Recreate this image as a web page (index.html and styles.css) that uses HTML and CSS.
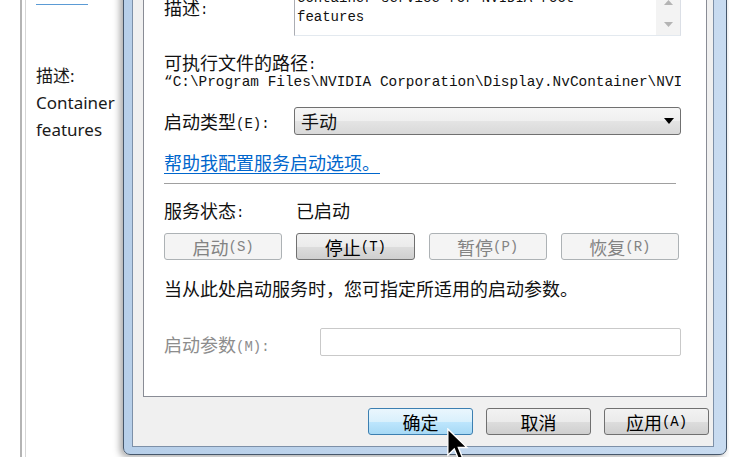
FILE: index.html
```html
<!DOCTYPE html>
<html lang="zh-CN">
<head>
    <meta charset="UTF-8">
    <meta name="viewport" content="width=device-width, initial-scale=1.0">
    <title>NVIDIA 服务属性</title>
    <link rel="stylesheet" href="styles.css">
</head>
<body>

<div class="screen">

    <!-- 后面的服务窗口 -->
    <div class="behind">
        <div class="pane">
            <div class="pane-in">
                <div class="link-cut"></div>
                <div class="side-desc">
                    <p>描述:</p>
                    <p>Container</p>
                    <p>features</p>
                </div>
            </div>
        </div>
    </div>

    <!-- 属性对话框 -->
    <div class="dialog">
        <div class="client">
            <div class="tab-page">

                <!-- 描述 -->
                <div class="row desc-row">
                    <span class="label desc-label">描述<span class="acc">:</span></span>
                    <div class="desc-box">
                        <div class="desc-text">Container service for NVIDIA root<br>features</div>
                        <div class="scrollbar">
                            <svg width="9" height="5" viewBox="0 0 9 5"><path d="M0 5 L4.5 0 L9 5 Z" fill="#b4b4b4"/></svg>
                            <svg width="9" height="5" viewBox="0 0 9 5"><path d="M0 0 L9 0 L4.5 5 Z" fill="#b4b4b4"/></svg>
                        </div>
                    </div>
                </div>

                <!-- 可执行文件的路径 -->
                <div class="path-label">可执行文件的路径<span class="acc">:</span></div>
                <div class="path">“C:\Program Files\NVIDIA Corporation\Display.NvContainer\NVIDIA Share.exe”</div>

                <!-- 启动类型 -->
                <div class="row type-row">
                    <span class="label type-label">启动类型<span class="acc">(E):</span></span>
                    <div class="select">
                        <span>手动</span>
                        <svg width="10" height="6" viewBox="0 0 10 6"><path d="M0 0 L10 0 L5 6 Z" fill="#000"/></svg>
                    </div>
                </div>

                <a class="help" href="#">帮助我配置服务启动选项。</a>

                <div class="sep"></div>

                <!-- 服务状态 -->
                <div class="row status-row">
                    <span class="label status-label">服务状态<span class="acc">:</span></span>
                    <span>已启动</span>
                </div>

                <div class="svc-buttons">
                    <button class="btn off">启动<span class="acc">(S)</span></button>
                    <button class="btn">停止<span class="acc">(T)</span></button>
                    <button class="btn off">暂停<span class="acc">(P)</span></button>
                    <button class="btn off">恢复<span class="acc">(R)</span></button>
                </div>

                <p class="hint">当从此处启动服务时，您可指定所适用的启动参数。</p>

                <!-- 启动参数 -->
                <div class="row param-row">
                    <span class="label param-label">启动参数<span class="acc">(M):</span></span>
                    <div class="param-input"></div>
                </div>

            </div>

            <div class="actions">
                <button class="btn primary">确定</button>
                <button class="btn">取消</button>
                <button class="btn">应用<span class="acc">(A)</span></button>
            </div>
        </div>
    </div>

    <!-- 鼠标指针 -->
    <svg class="cursor" width="22" height="34" viewBox="0 0 13 20">
        <path d="M0.5 0.5 L0.5 16 L4.3 12.3 L7 18.8 L9.3 17.8 L6.7 11.5 L11.8 11.5 Z" fill="#000" stroke="#fff" stroke-width="0.8"/>
    </svg>

</div>

</body>
</html>
```

FILE: styles.css
```css
* {
    box-sizing: border-box;
}

body {
    margin: 0;
    background-color: white;
    overflow: hidden;
    font-family: "Noto Sans CJK SC", sans-serif;
    color: #111;
}

p {
    margin: 0;
}

.screen {
    position: relative;
    display: flex;
    width: 729px;
    height: 457px;
    overflow: hidden;
}

/* Janela de serviços atrás */
.behind {
    width: 123px;
    flex: none;
    padding-left: 20px;
}

.pane {
    height: 100%;
    border-left: 2px solid #b4b4b4;
    padding-left: 3px;
}

.pane-in {
    height: 100%;
    border-left: 1px solid #d6d6d6;
    padding-left: 10px;
}

.link-cut {
    width: 52px;
    height: 5px;
    border-bottom: 1px solid #5b9bd5;
}

.side-desc {
    margin-top: 57px;
    font-family: "Noto Sans", "Noto Sans CJK SC", sans-serif;
    font-size: 17px;
    line-height: 27px;
    color: #1a1a1a;
}

/* Diálogo */
.dialog {
    width: 604px;
    height: 479px;
    flex: none;
    margin-top: -24px;
    border: 1px solid #46576b;
    border-radius: 0 0 7px 7px;
    background: linear-gradient(90deg, #b7cfe9, #c8dbf0);
    padding: 0 12px 7px 8px;
    box-shadow: -3px 2px 7px rgba(0, 0, 0, 0.35);
    display: flex;
    flex-direction: column;
}

.client {
    flex: 1;
    border: 1px solid #7d90a8;
    background-color: #f0f0f0;
    padding: 0 6px 0 10px;
}

.tab-page {
    background-color: white;
    border: 1px solid #898c95;
    padding: 7px 25px 40px 20px;
    font-size: 18px;
    line-height: 20px;
}

.acc {
    font-family: "Liberation Mono", monospace;
    font-size: 14px;
    line-height: 10px;
    vertical-align: 1px;
}

.row {
    display: flex;
    align-items: center;
}

.label {
    flex: none;
    white-space: nowrap;
}

/* Descrição */
.desc-row {
    align-items: flex-start;
}

.desc-label {
    width: 130px;
    padding-top: 11px;
}

.desc-box {
    flex: 1;
    height: 50px;
    display: flex;
    border: 1px solid #abadb3;
    border-right-color: #dbdfe6;
    border-bottom-color: #e3e9ef;
}

.desc-text {
    flex: 1;
    padding: 2px 0 0 2px;
    font-family: "Liberation Mono", monospace;
    font-size: 14px;
    line-height: 19px;
}

.scrollbar {
    width: 24px;
    background-color: #f3f3f3;
    display: flex;
    flex-direction: column;
    justify-content: space-between;
    align-items: center;
    padding: 13px 0 8px;
}

.scrollbar svg {
    display: block;
}

/* Caminho */
.path-label {
    margin-top: 16px;
}

.path {
    white-space: nowrap;
    overflow: hidden;
    font-family: "Liberation Mono", monospace;
    font-size: 14.4px;
    line-height: 20px;
}

/* Tipo de inicialização */
.type-row {
    margin-top: 15px;
}

.type-label {
    width: 130px;
}

.select {
    flex: 1;
    height: 28px;
    display: flex;
    align-items: center;
    justify-content: space-between;
    padding: 0 6px 0 6px;
    border: 1px solid #707070;
    border-radius: 3px;
    background: linear-gradient(#f6f6f6 0%, #efefef 50%, #e4e4e4 51%, #d9d9d9 100%);
}

.help {
    display: inline-block;
    margin-top: 17px;
    color: #0066cc;
    text-decoration: underline;
    text-underline-offset: 3px;
}

.sep {
    margin-top: 11px;
    margin-right: 5px;
    border-top: 1px solid #a0a0a0;
}

/* Estado do serviço */
.status-row {
    margin-top: 16px;
}

.status-label {
    width: 132px;
}

.btn {
    height: 27px;
    padding: 0;
    border: 1px solid #707070;
    border-radius: 3px;
    background: linear-gradient(#f2f2f2 0%, #ebebeb 50%, #dddddd 51%, #cfcfcf 100%);
    font: inherit;
    font-size: 18px;
    line-height: 1;
    color: #000;
    display: flex;
    align-items: center;
    justify-content: center;
}

.btn .acc {
    vertical-align: -1px;
}

.btn.off {
    border-color: #adb2b5;
    background: #f4f4f4;
    color: #838383;
}

.btn.primary {
    border-color: #3c7fb1;
    background: linear-gradient(#eaf6fd 0%, #d9f0fc 50%, #bee6fd 51%, #a7d9f5 100%);
}

.svc-buttons {
    margin-top: 13px;
    padding-right: 2px;
    display: grid;
    grid-template-columns: repeat(4, 1fr);
    gap: 14px;
}

.hint {
    margin-top: 18px;
}

/* Parâmetros */
.param-row {
    margin-top: 30px;
}

.param-label {
    width: 156px;
    color: #8d8d8d;
    padding-top: 3px;
}

.param-input {
    flex: 1;
    height: 28px;
    border: 1px solid #c9c9c9;
    border-radius: 2px;
    background-color: white;
}

/* Botões do rodapé */
.actions {
    display: flex;
    justify-content: flex-end;
    gap: 13px;
    margin-top: 11px;
    margin-right: -2px;
}

.actions .btn {
    width: 105px;
}

/* Ponteiro */
.cursor {
    position: absolute;
    left: 447px;
    top: 428px;
}
```
